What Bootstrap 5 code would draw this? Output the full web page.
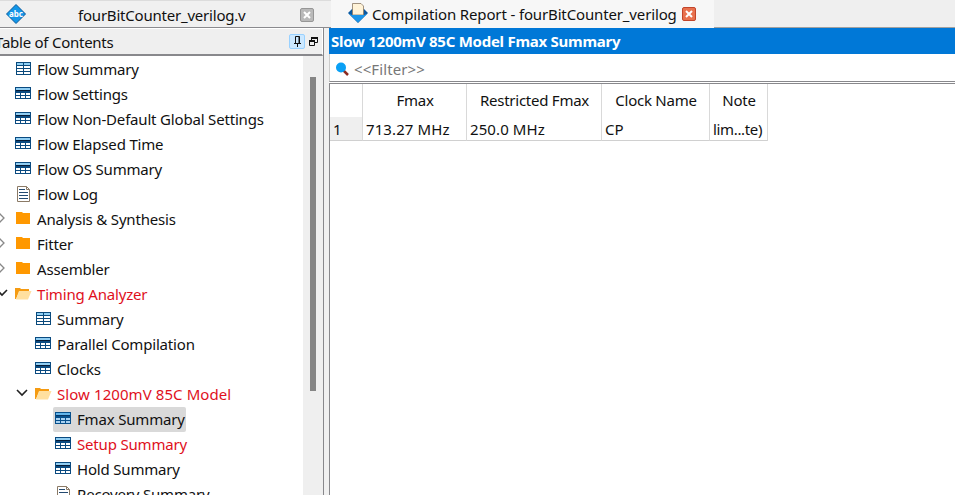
<!DOCTYPE html>
<html lang="en">
<head>
<meta charset="utf-8">
<title>Compilation Report</title>
<link href="https://cdn.jsdelivr.net/npm/bootstrap@5.3.0/dist/css/bootstrap.min.css" rel="stylesheet">
<style>
body{font:15px/25px "Noto Sans",sans-serif;color:#111;background:#fff;width:955px;height:495px}
svg{display:block;flex:none}
.tabs{height:28px;background:#efefef}
.tab-a{width:331px;background:#f0f0f0;border-top:1px solid #dcdcdc;border-bottom:1px solid #8a8a8e}
.tab-b{width:383px;background:#f7f7f7}
.tab-c{border-bottom:1px solid #a0a0a0}
.abc{margin-left:5px}
.name1{margin-left:51px;width:229px;letter-spacing:-.21px;padding-top:2px}
.close1{margin-top:2px;margin-left:-7px}
.name2{margin-left:3px;width:310px;white-space:nowrap;letter-spacing:-.14px}
.rep{margin:-3px 0 0 16px}
.left{width:324px;border-right:1px solid #88888c}
.toc-head{height:28px;background:#efefef;border-top:1px solid #fff;border-bottom:2px solid #88888c;border-right:1px solid #fff}
.toc-t{margin-left:-5px;padding-top:2px;letter-spacing:-.25px}
.pin{width:16px;height:15px;background:#cce8ff;border:1px solid #99d1ff;border-radius:2px}
.toc-head .pin{margin-right:4px}
.tree{height:439px;padding-top:1px}
.node{height:25px;white-space:nowrap;letter-spacing:-.18px}
.wide{letter-spacing:.08px}
.arrow{width:15px}
.arrow svg{margin:-3px 0 0 -1px}
.arrow .cut{margin:-4px 0 0 -4px}
.ico{width:22px}
.ico svg{margin-top:-1px}
.l1{margin-left:20px}.l2{margin-left:40px}
.red{color:#e0101c}
.pick{background:#d9d9d9;border-radius:2px;margin-left:-2px;padding-left:2px;width:133px}
.pick .ico{flex:none}
.track{width:20px;background:#efefef;padding:21px 0 0 7px}
.thumb{width:6px;height:314px;background:#858585}
.split{width:5px;background:#f0f0f0}
.title-bar{height:26px;background:#0078d7;color:#fff;font-weight:700;padding:1px 0 0 2px;letter-spacing:-.26px}
.filter{height:28px;border-bottom:1px solid #88888c;color:#777;border-left:1px solid #ccc}
.filter span{padding-top:3px;letter-spacing:.1px}
.grid-wrap{border-top:1px solid #88888c;border-left:1px solid #88888c;margin-top:1px}
.fmax{width:438px;table-layout:fixed;border-collapse:separate;border-spacing:0}
.fmax .c0{width:33px}.fmax .c1{width:104px}.fmax .c2{width:135px}.fmax .c3{width:108px}.fmax .c4{width:58px}
.fmax th,.fmax td{border-right:1px solid #d9d9d9;padding:0;white-space:nowrap}
.fmax thead th{height:33px;font-weight:400;text-align:center;letter-spacing:-.25px;padding-left:1px}
.fmax tbody th,.fmax tbody td{height:24px;line-height:21px;padding-top:2px;border-bottom:1px solid #d0d0d0}
.fmax tbody td{padding-left:3px;letter-spacing:.1px}
.fmax tbody td.tight{letter-spacing:-.35px}
.fmax tbody th{background:#efefef;font-weight:400;padding-left:3px}
</style>
<script src="https://cdn.jsdelivr.net/npm/bootstrap@5.3.0/dist/js/bootstrap.bundle.min.js"></script>
</head>
<body class="overflow-hidden d-flex flex-column">
<svg width="0" height="0" class="position-absolute">
<symbol id="sum" viewBox="0 0 16 14"><path fill="#0a4a7c" d="M1 0h15v13H1z"/><path fill="#8fd0f5" d="M2 1h6v2H2zM9 1h6v2H9z"/><path fill="#fff" d="M2 4h6v2H2zM9 4h6v2H9zM2 7h6v2H2zM9 7h6v2H9zM2 10h6v2H2zM9 10h6v2H9z"/></symbol>
<symbol id="tbl" viewBox="0 0 16 14"><path fill="#0a4a80" d="M0 0h16v12H0z"/><path fill="#8fcdf2" d="M1 1h14v2H1z"/><path fill="#061c38" d="M1 3h14v1H1z"/><path fill="#fff" d="M1 6h4v2H1zM6 6h4v2H6zM11 6h4v2h-4zM1 9h4v2H1zM6 9h4v2H6zM11 9h4v2h-4z"/></symbol>
<symbol id="tblp" viewBox="0 0 16 14"><path fill="#07508c" d="M0 0h16v12H0z"/><path fill="#62b5ea" d="M1 1h14v2H1z"/><path fill="#063564" d="M1 3h14v1H1z"/><path fill="#a9d2f2" d="M1 6h4v2H1zM6 6h4v2H6zM11 6h4v2h-4zM1 9h4v2H1zM6 9h4v2H6zM11 9h4v2h-4z"/></symbol>
<symbol id="log" viewBox="0 0 16 16"><path fill="#fff" stroke="#8b7a66" d="M2.500.5h9l3 3v12h-12z"/><path fill="none" stroke="#8b7a66" d="M11.500.5v3h3"/><path stroke="#244a70" d="M4 3.500h6M4 6.500h9M4 9.500h9M4 12.500h9"/></symbol>
<symbol id="dir" viewBox="0 0 16 14"><path fill="#ff9800" d="M1 0h6l1 1h7v11H1z"/></symbol>
<symbol id="open" viewBox="0 0 17 14"><path fill="#f59b12" d="M0 1h5l1 1h8v3H4L1 12H0z"/><path fill="#ffe0a0" d="M4 4h12.500L13 12.500H1z"/></symbol>
<symbol id="right" viewBox="0 0 10 12"><path fill="none" stroke="#888" stroke-width="1.300" d="M0 1l5 5-5 5"/></symbol>
<symbol id="down" viewBox="0 0 12 8"><path fill="none" stroke="#222" stroke-width="1.600" d="M1 1l5 5 5-5"/></symbol>
</svg>
<div class="tabs d-flex flex-shrink-0">
 <div class="tab-a d-flex align-items-center">
  <svg class="abc" width="22" height="22" viewBox="0 0 22 22"><path fill="#1296e8" stroke="#07599c" d="M11 1.500 20.500 11 11 20.500 1.500 11z" stroke-linejoin="round"/><text x="11" y="13.500" text-anchor="middle" fill="#fff" font-size="8" font-weight="700">abc</text></svg>
  <span class="name1">fourBitCounter_verilog.v</span>
  <svg class="close1" width="14" height="14" viewBox="0 0 14 14"><rect x=".5" y=".5" width="13" height="13" rx="1.500" fill="#b9b9b9" stroke="#969696"/><path stroke="#fff" stroke-width="2" d="M4 4l6 6M10 4l-6 6"/></svg>
 </div>
 <div class="tab-b d-flex align-items-center">
  <svg class="rep" width="22" height="22" viewBox="0 0 22 22"><path fill="#0a58a0" d="M1 11 5 7h12l4 4-10 10z"/><path fill="#fff3d8" stroke="#8b7a66" stroke-width=".8" d="M5.500 1.500H14l2.500 2.500v9h-11z"/><path fill="#1b95e8" d="M1.500 11.500 5 13h12l3.500-1.500L11 20.500z"/></svg>
  <span class="name2">Compilation Report - fourBitCounter_verilog</span>
  <svg class="close2" width="14" height="14" viewBox="0 0 14 14"><rect x=".5" y=".5" width="13" height="13" rx="1.500" fill="#e8714e" stroke="#c2452a"/><path stroke="#fff" stroke-width="2" d="M4 4l6 6M10 4l-6 6"/></svg>
 </div>
 <div class="tab-c flex-fill"></div>
</div>
<main class="d-flex flex-fill">
 <section class="left">
  <div class="toc-head d-flex align-items-center overflow-hidden"><span class="toc-t">Table of Contents</span>
   <div class="pin ms-auto d-flex justify-content-center align-items-center"><svg width="9" height="11" viewBox="0 0 9 11"><path fill="none" stroke="#111" d="M2.500 7V.5h4V7M6 .5V7M1 7.500h7M4.500 8v3"/></svg></div>
   <svg class="me-1" width="9" height="10" viewBox="0 0 9 10"><path fill="none" stroke="#111" d="M2.500 3V.5h6v5H6M.5 3.500h5v5h-5z"/><path stroke="#111" stroke-width="2" d="M2 1h7M0 4h6"/></svg>
  </div>
  <div class="d-flex">
   <div class="tree flex-fill overflow-hidden">
    <div class="node d-flex align-items-center"><span class="arrow"></span><span class="ico"><svg width="16" height="14"><use href="#sum"/></svg></span><span>Flow Summary</span></div>
    <div class="node d-flex align-items-center"><span class="arrow"></span><span class="ico"><svg width="16" height="14"><use href="#tbl"/></svg></span><span>Flow Settings</span></div>
    <div class="node d-flex align-items-center"><span class="arrow"></span><span class="ico"><svg width="16" height="14"><use href="#tbl"/></svg></span><span>Flow Non-Default Global Settings</span></div>
    <div class="node d-flex align-items-center"><span class="arrow"></span><span class="ico"><svg width="16" height="14"><use href="#tbl"/></svg></span><span>Flow Elapsed Time</span></div>
    <div class="node d-flex align-items-center"><span class="arrow"></span><span class="ico"><svg width="16" height="14"><use href="#tbl"/></svg></span><span>Flow OS Summary</span></div>
    <div class="node d-flex align-items-center"><span class="arrow"></span><span class="ico"><svg width="16" height="16"><use href="#log"/></svg></span><span>Flow Log</span></div>
    <div class="node d-flex align-items-center"><span class="arrow"><svg width="10" height="12"><use href="#right"/></svg></span><span class="ico"><svg width="16" height="14"><use href="#dir"/></svg></span><span>Analysis &amp; Synthesis</span></div>
    <div class="node d-flex align-items-center"><span class="arrow"><svg width="10" height="12"><use href="#right"/></svg></span><span class="ico"><svg width="16" height="14"><use href="#dir"/></svg></span><span>Fitter</span></div>
    <div class="node d-flex align-items-center"><span class="arrow"><svg width="10" height="12"><use href="#right"/></svg></span><span class="ico"><svg width="16" height="14"><use href="#dir"/></svg></span><span>Assembler</span></div>
    <div class="node d-flex align-items-center red"><span class="arrow"><svg class="cut" width="12" height="8"><use href="#down"/></svg></span><span class="ico"><svg width="17" height="14"><use href="#open"/></svg></span><span>Timing Analyzer</span></div>
    <div class="node d-flex align-items-center l1"><span class="arrow"></span><span class="ico"><svg width="16" height="14"><use href="#sum"/></svg></span><span>Summary</span></div>
    <div class="node d-flex align-items-center l1"><span class="arrow"></span><span class="ico"><svg width="16" height="14"><use href="#tbl"/></svg></span><span>Parallel Compilation</span></div>
    <div class="node d-flex align-items-center l1"><span class="arrow"></span><span class="ico"><svg width="16" height="14"><use href="#tbl"/></svg></span><span>Clocks</span></div>
    <div class="node d-flex align-items-center l1 red wide"><span class="arrow"><svg class="cut" width="12" height="8"><use href="#down"/></svg></span><span class="ico"><svg width="17" height="14"><use href="#open"/></svg></span><span>Slow 1200mV 85C Model</span></div>
    <div class="node d-flex align-items-center l2"><span class="arrow"></span><span class="pick d-flex align-items-center"><span class="ico"><svg width="16" height="14"><use href="#tblp"/></svg></span><span>Fmax Summary</span></span></div>
    <div class="node d-flex align-items-center l2 red"><span class="arrow"></span><span class="ico"><svg width="16" height="14"><use href="#tbl"/></svg></span><span>Setup Summary</span></div>
    <div class="node d-flex align-items-center l2"><span class="arrow"></span><span class="ico"><svg width="16" height="14"><use href="#tbl"/></svg></span><span>Hold Summary</span></div>
    <div class="node d-flex align-items-center l2"><span class="arrow"></span><span class="ico"><svg width="16" height="16"><use href="#log"/></svg></span><span>Recovery Summary</span></div>
   </div>
   <div class="track"><div class="thumb"></div></div>
  </div>
 </section>
 <div class="split"></div>
 <section class="flex-fill d-flex flex-column">
  <div class="title-bar"><span>Slow 1200mV 85C Model Fmax Summary</span></div>
  <div class="filter d-flex align-items-center"><svg class="ms-1 me-1" width="16" height="16" viewBox="0 0 16 16"><path stroke="#8c2a20" stroke-width="2.500" d="M9 10l5 5"/><circle cx="7" cy="7.500" r="5" fill="#0aa0f5"/></svg><span>&lt;&lt;Filter&gt;&gt;</span></div>
  <div class="grid-wrap flex-fill">
   <table class="fmax"><colgroup><col class="c0"><col class="c1"><col class="c2"><col class="c3"><col class="c4"></colgroup>
    <thead><tr><th></th><th>Fmax</th><th>Restricted Fmax</th><th>Clock Name</th><th>Note</th></tr></thead>
    <tbody><tr><th>1</th><td>713.27 MHz</td><td>250.0 MHz</td><td>CP</td><td class="tight">lim...te)</td></tr></tbody>
   </table>
  </div>
 </section>
</main>
</body>
</html>
